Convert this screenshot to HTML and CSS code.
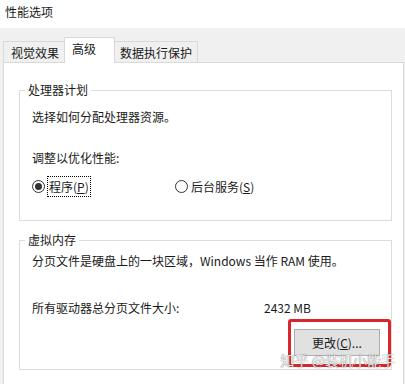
FILE: index.html
```html
<!DOCTYPE html>
<html lang="zh-CN">
<head>
  <meta charset="UTF-8">
  <meta name="viewport" content="width=device-width, initial-scale=1.0">
  <title>性能选项</title>
  <link rel="stylesheet" href="styles.css">
</head>
<body>
  <header class="titlebar">性能选项</header>
  <nav class="tabs">
    <div class="tab tab-first">视觉效果</div>
    <div class="tab tab-active">高级</div>
    <div class="tab tab-last">数据执行保护</div>
  </nav>
  <main class="panel">
    <fieldset class="group group-cpu">
      <legend>处理器计划</legend>
      <p class="desc">选择如何分配处理器资源。</p>
      <p class="desc desc-sub">调整以优化性能:</p>
      <div class="radios">
        <label class="radio-item radio-program">
          <span class="radio checked"></span>
          <span class="focus">程序(<u>P</u>)</span>
        </label>
        <label class="radio-item">
          <span class="radio"></span>
          <span>后台服务(<u>S</u>)</span>
        </label>
      </div>
    </fieldset>
    <fieldset class="group group-mem">
      <legend>虚拟内存</legend>
      <p class="desc">分页文件是硬盘上的一块区域，Windows 当作 RAM 使用。</p>
      <div class="size-row">
        <span class="size-label">所有驱动器总分页文件大小:</span>
        <span class="size-value">2432 MB</span>
      </div>
      <div class="btn-row">
        <button class="btn">更改(<u>C</u>)...</button>
      </div>
      <div class="highlight"></div>
      <div class="watermark">知乎 @装机小能手</div>
    </fieldset>
  </main>
</body>
</html>
```

FILE: styles.css
```css
body {
  margin: 0;
  width: 405px;
  height: 384px;
  overflow: hidden;
  background-color: #f0f0f0;
  font-family: "Noto Sans CJK SC", "Noto Sans", sans-serif;
  font-size: 12px;
  color: #1a1a1a;
}
.titlebar {
  height: 28px;
  line-height: 24px;
  padding-left: 5px;
  background-color: #fff;
}
.tabs {
  display: flex;
  align-items: flex-end;
  height: 34px;
  padding-left: 3px;
  box-sizing: border-box;
}
.tab {
  height: 21px;
  line-height: 21px;
  box-sizing: border-box;
  border: 1px solid #d9d9d9;
  border-bottom: none;
  background-color: #f0f0f0;
}
.tab-first {
  padding: 0 5px 0 7px;
  border-right: none;
}
.tab-active {
  position: relative;
  height: 26px;
  line-height: 22px;
  margin-bottom: -1px;
  padding: 0 18px 0 7px;
  background-color: #fff;
}
.tab-last {
  padding: 0 5px;
  border-left: none;
}
.panel {
  width: 401px;
  height: 340px;
  margin-left: 3px;
  box-sizing: border-box;
  border: 1px solid #d9d9d9;
  background-color: #fff;
  padding-top: 19px;
}
.group {
  position: relative;
  margin: 0 11px 0 15px;
  padding: 0 11px 0 12px;
  border: 1px solid #dcdcdc;
  min-width: 0;
}
.group legend {
  margin-left: -7px;
  padding: 0 3px;
  line-height: 16px;
}
.group-cpu {
  padding-top: 11px;
}
.group-mem {
  margin-top: 11px;
  padding-top: 5px;
}
.desc {
  margin: 0;
  line-height: 16px;
}
.desc-sub {
  margin-top: 25px;
}
.radios {
  display: flex;
  margin-top: 11px;
  padding-bottom: 24px;
}
.radio-item {
  display: flex;
  align-items: center;
  gap: 3px;
}
.radio-program {
  width: 143px;
}
.radio {
  width: 13px;
  height: 13px;
  box-sizing: border-box;
  border: 1px solid #333;
  border-radius: 50%;
  display: flex;
  align-items: center;
  justify-content: center;
}
.radio.checked::after {
  content: "";
  width: 7px;
  height: 7px;
  border-radius: 50%;
  background-color: #333;
}
.focus {
  outline: 1px dotted #000;
  padding: 1px 1px;
  line-height: 17px;
}
.size-row {
  display: flex;
  margin-top: 31px;
  line-height: 16px;
}
.size-label {
  width: 232px;
}
.btn-row {
  display: flex;
  justify-content: flex-end;
  margin-top: 13px;
  padding-bottom: 13px;
}
.btn {
  width: 86px;
  height: 27px;
  font-family: inherit;
  font-size: 12px;
  color: #1a1a1a;
  background-color: #e1e1e1;
  border: 1px solid #adadad;
  padding: 0;
}
.highlight {
  position: absolute;
  right: 0;
  bottom: 2px;
  width: 97px;
  height: 42px;
  border: 3px solid #d8262b;
  border-radius: 3px;
}
.watermark {
  position: absolute;
  right: -4px;
  bottom: 0;
  font-size: 14px;
  line-height: 18px;
  color: rgba(255, 255, 255, 0.85);
  text-shadow: 0 0 1px rgba(90, 90, 90, 0.6), 0 0 1px rgba(90, 90, 90, 0.6);
}
```
